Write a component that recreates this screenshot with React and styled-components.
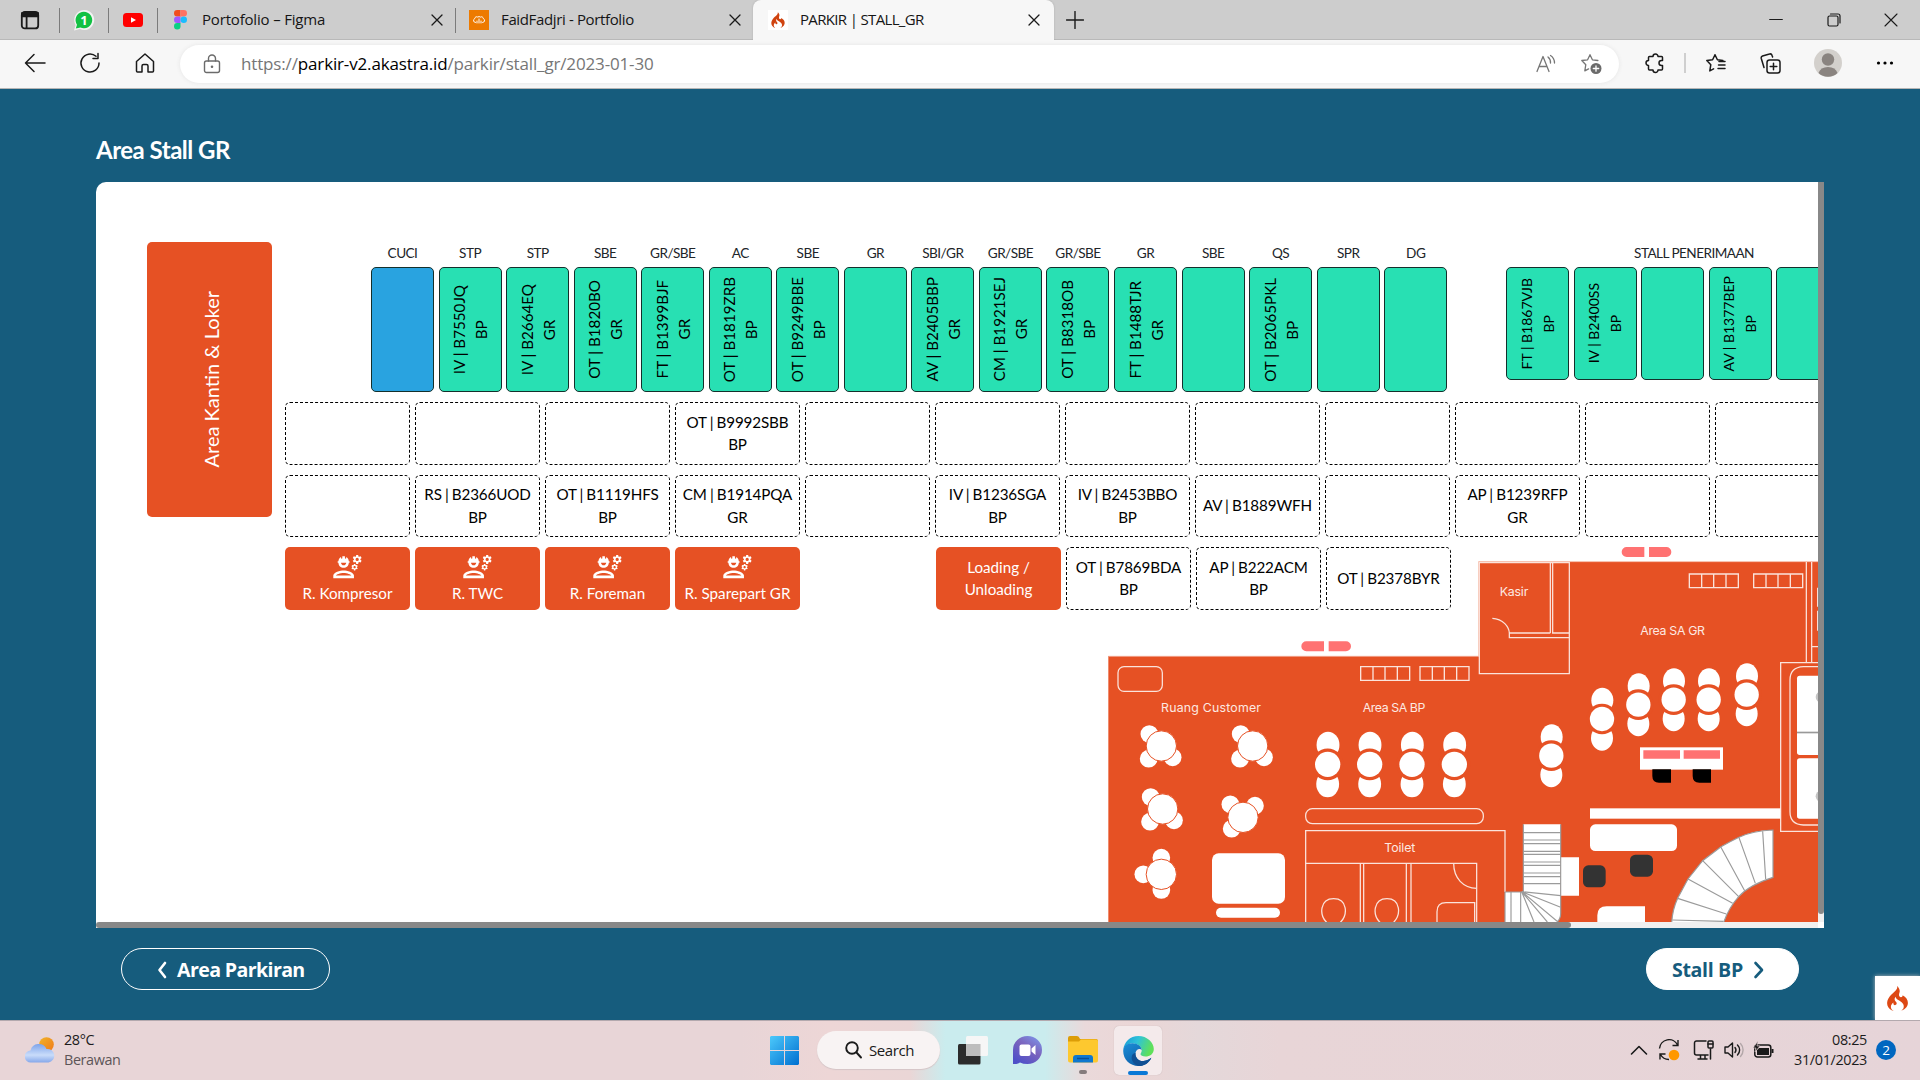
import React from 'react';
import styled, { createGlobalStyle, css } from 'styled-components';
import { MdOutlineEngineering } from 'react-icons/md';
import { SiCodeigniter } from 'react-icons/si';

const Global = createGlobalStyle`
  * { box-sizing: border-box; }
  body { margin: 0; background: #165c7d; overflow: hidden; }
`;
const UI = `'Open Sans', 'Noto Sans', sans-serif`;
const LATO = `Lato, 'Open Sans', sans-serif`;
const ORANGE = '#e65124';

const Screen = styled.div`
  width: 1920px; height: 1080px; display: flex; flex-direction: column;
  overflow: hidden; background: #165c7d; font-family: ${UI};
  svg { display: block; flex: none; }
`;

/* ---------- browser chrome ---------- */
const TabBar = styled.div`
  height: 40px; flex: none; display: flex; align-items: center; background: #cdcdcd;
  box-shadow: inset 0 -1px 0 #b9b9b9;
`;
const Slot = styled.div`
  width: ${p => p.$w}px; height: 100%; flex: none; display: flex; align-items: center; justify-content: center;
  margin-left: ${p => p.$ml || 0}px;
`;
const Divider = styled.i`
  width: ${p => p.$w || 1}px; height: ${p => p.$h || 25}px; flex: none;
  background: ${p => p.$c || '#7b7b7b'}; margin-left: ${p => p.$ml || 0}px;
`;
const Tab = styled.div`
  width: ${p => p.$w}px; height: 40px; flex: none; display: flex; align-items: center;
  padding: 0 ${p => p.$pr}px 0 ${p => p.$pl}px; font-size: 15px; color: #151515;
  letter-spacing: ${p => p.$ls}px; white-space: nowrap;
  ${p => p.$active && css`background: #f7f7f7; border-radius: 8px 8px 0 0; box-shadow: 0 0 2px #aaa; clip-path: inset(0 -2px 0 -2px);`}
`;
const TabIcon = styled.span`
  width: 20px; height: 20px; margin-right: ${p => p.$mr}px; display: flex; align-items: center; justify-content: center; flex: none;
  background: ${p => p.$bg || 'transparent'};
`;
const TabTitle = styled.span`flex: 1; line-height: 20px; padding-bottom: 2px;`;
const Toolbar = styled.div`
  height: 49px; flex: none; display: flex; align-items: center; background: #f7f7f7;
  border-bottom: 1px solid #b5b5b5; padding: 0 0 2px 7.5px;
`;
const Address = styled.div`
  width: 1439px; height: 38px; flex: none; margin: 1px 0 0 7.5px; border-radius: 19px; background: #fff;
  display: flex; align-items: center; padding: 0 6px 0 17px; box-shadow: 0 0 4px #e4e4e4;
`;
const Url = styled.span`
  flex: 1; margin-left: 14px; font-size: 17px; letter-spacing: -0.15px; color: #767676; white-space: nowrap;
  b { font-weight: 400; color: #000; }
`;

/* ---------- page ---------- */
const Page = styled.main`
  height: 931px; flex: none; padding: 44px 96px 0; display: flex; flex-direction: column; background: #165c7d;
`;
const Title = styled.h1`
  margin: 0; height: 49px; font: 700 24px/33px ${LATO}; letter-spacing: -0.5px; color: #fff;
`;
const Panel = styled.section`
  width: 1728px; height: 746px; flex: none; display: grid; grid-template: 740px 6px / 1722px 6px;
  background: #fff; border-radius: 10px 0 0 0; overflow: hidden;
`;
const Viewport = styled.div`overflow: hidden; display: flex; padding-left: 51px;`;
const VTrack = styled.div`background: #f0f0f0;`;
const VThumb = styled.div`height: 732px; background: #888; border-radius: 0 0 3px 3px;`;
const HTrack = styled.div`background: #f0f0f0;`;
const HThumb = styled.div`height: 6px; width: 1475px; background: #888; border-radius: 3px;`;

const Canteen = styled.div`
  width: 125px; height: 275px; flex: none; margin: 60px 13px 0 0; background: ${ORANGE}; border-radius: 5px;
  display: flex; align-items: center; justify-content: center; color: #fff;
  font: 400 20px/26px ${LATO}; padding-left: 2px;
  span { writing-mode: vertical-rl; transform: rotate(180deg); }
`;
const Lots = styled.div`flex: none; width: 1800px; padding-top: 57px;`;
const StallLine = styled.div`display: flex; align-items: flex-start; margin-left: 86px; height: 153px;`;
const StallGroup = styled.div`display: flex; gap: 4.55px; margin-left: ${p => p.$ml || 0}px;`;
const StallCol = styled.div`width: 63px; flex: none;`;
const Label = styled.div`
  height: 28px; font: 400 13.6px/29px ${LATO}; color: #212529; text-align: center; white-space: nowrap;
  letter-spacing: -0.55px; width: ${p => p.$w ? p.$w + 'px' : 'auto'};
`;
const Stall = styled.div`
  width: 63px; height: ${p => p.$h}px; flex: none; border: 1px solid #14302c; border-radius: 5px;
  background: ${p => p.$blue ? '#29a3e0' : '#28e0b3'};
  display: flex; align-items: center; justify-content: center;
  color: #000; font: 400 ${p => p.$fs || 15.2}px/22px ${LATO}; text-align: center; white-space: nowrap;
  span { writing-mode: vertical-rl; transform: rotate(180deg); }
`;
const Reception = styled.div`margin-left: 58.8px; flex: none;`;
const LotRow = styled.div`display: flex; gap: 5px; margin-top: 10px; height: ${p => p.$h}px;`;
const Lot = styled.div`
  width: 125px; height: 100%; flex: none; display: flex; flex-direction: column; align-items: center; justify-content: center;
  font: 400 15.2px/22.4px ${LATO}; letter-spacing: -0.12px; word-spacing: -0.6px; color: #000; text-align: center; white-space: nowrap;
  border: 1px dashed #000; border-radius: 5px; padding-bottom: 1px; margin-left: ${p => p.$ml || 0}px;
  ${p => p.$solid && css`background: ${ORANGE}; border: 0; color: #fff; letter-spacing: 0; word-spacing: 0;`}
`;
const Bottom = styled.div`
  display: grid; grid-template-columns: 1fr;
  > * { grid-area: 1 / 1; }
  > svg { margin: 10px 0 0 823px; }
`;
const Nav = styled.div`display: flex; justify-content: space-between; padding: 20px 25px 0;`;
const NavButton = styled.button`
  width: ${p => p.$w}px; height: 42px; border-radius: 21px; padding: 1px 0 0 ${p => p.$pl}px; display: flex; align-items: center;
  gap: ${p => p.$gap}px; font: 700 19.6px/28px ${UI}; letter-spacing: ${p => p.$ls}px; white-space: nowrap;
  border: 1px solid #fff; background: ${p => p.$filled ? '#fff' : 'transparent'}; color: ${p => p.$filled ? '#165c7d' : '#fff'};
`;
const DebugBadge = styled.div`
  position: absolute; left: 1875px; top: 976px; width: 45px; height: 44px; background: #fff; color: #dd4814;
  display: flex; align-items: center; justify-content: center; box-shadow: 0 0 4px #bbb;
`;

/* ---------- taskbar ---------- */
const Taskbar = styled.footer`
  height: 60px; flex: none; display: flex; align-items: center; border-top: 1px solid #b3a9ae; position: relative; padding-bottom: 1px;
  background: linear-gradient(90deg, #e8d5d7 0, #e8d5d7 740px, #edd6d6 830px, #ead6d6 910px, #caecee 945px, #caecee 1045px, #ead9da 1085px, #ebd6d6 1140px, #e4d8da 1200px, #e8d5d7 1280px, #e6d4d8 100%);
`;
const Stack = styled.div`
  display: flex; flex-direction: column; width: ${p => p.$w}px; flex: none; margin-left: ${p => p.$ml || 0}px; text-align: ${p => p.$right ? 'right' : 'left'};
  font-size: 14.4px; line-height: 20px; letter-spacing: ${p => p.$ls}px; color: #1c1c1c; white-space: nowrap; padding-bottom: 1px;
  em { font-style: normal; color: #5d5557; }
`;
const SearchPill = styled.div`
  width: 123px; height: 38px; border-radius: 19px; background: #f8f3f3; margin-left: 18px; flex: none;
  display: flex; align-items: center; padding-left: 28px; gap: 7px; font-size: 15px; letter-spacing: -0.4px; color: #1a1a1a;
  box-shadow: 0 1px 1px #d5c5c7;
`;
const AppTile = styled.div`
  width: 48px; height: 49px; margin-left: ${p => p.$ml}px; border-radius: 5px; flex: none; display: flex; flex-direction: column;
  align-items: center; justify-content: flex-end; gap: ${p => p.$gap}px; padding-bottom: ${p => p.$pb || 0}px;
  ${p => p.$active && css`background: #f4eaeb; box-shadow: 0 0 1px #bbaaac;`}
`;
const Mark = styled.i`width: ${p => p.$w}px; height: 4px; border-radius: 2px; background: ${p => p.$c};`;
const Count = styled.div`
  width: 20px; height: 20px; border-radius: 50%; background: #0067c0; color: #fff; font-size: 13.5px; line-height: 20px; text-align: center; margin-left: 9px;
`;

/* ---------- icons ---------- */
const Line = ({ w = 20, h = 20, sw = 1.4, c = '#1a1a1a', children }) => (
  <svg width={w} height={h} viewBox={`0 0 ${w} ${h}`} fill="none" stroke={c} strokeWidth={sw} strokeLinecap="round" strokeLinejoin="round">{children}</svg>
);
const Close = () => <Line w={16} h={16} sw={1.3}><path d="M3 3l10 10M13 3L3 13" /></Line>;
const star = 'M10 1.8l2.4 5 5.5.7M10 1.8l-2.4 5-5.8.7 4 4.2-1 6.2 3.8-2';

/* ---------- floor plan ---------- */
const Seat = ({ x, y, s = 1 }) => (
  <g transform={`translate(${x} ${y}) scale(${s})`}>
    <ellipse cx="1" cy="-56" rx="33" ry="38" fill="#fff" />
    <ellipse cx="0" cy="57" rx="33" ry="38" fill="#fff" />
    <circle r="46" fill={ORANGE} />
    <circle r="36.5" fill="#fff" />
  </g>
);
const Round = ({ x, y, seats }) => (
  <g transform={`translate(${x} ${y})`} fill="#fff">
    {seats.map(([a, b], i) => <circle key={i} cx={a} cy={b} r="26.5" />)}
    <circle r="45.5" stroke={ORANGE} strokeWidth="3" />
  </g>
);
const Shelf = ({ x, y }) => (
  <path strokeWidth="4" d={`M${x} ${y}h147v41h-147zM${x + 37} ${y}v41M${x + 73} ${y}v41M${x + 110} ${y}v41`} />
);
const PlanText = ({ x, y, w, children }) => (
  <text x={x} y={y} textLength={w} fontSize="37" fontWeight="400" fontFamily="Inter, Lato, sans-serif" fill="#fde9e2" stroke="none">{children}</text>
);
const Door = ({ x, y }) => (
  <path fill="#ff7272" d={`M${x + 14} ${y}h53v30h-53a15 15 0 0 1 0-30zM${x + 81} ${y}h52a15 15 0 0 1 0 30h-52z`} />
);
const three = [[-36, -36], [-38, 38], [34, 34]];
const FloorPlan = () => (
  <svg width="710" height="375" viewBox="24 21 2130 1125">
    <path fill={ORANGE} d="M24 349H1136V66H2160V1146H24z" />
    <g transform="translate(0 240)" fill="none" stroke="#fbe3db" strokeWidth="3.8">
      <g stroke="none"><Door x={605} y={64} /></g>
      <path d="M25 906V109H1138" stroke="#f3a78f" strokeWidth="2.5" />
      <rect x="54" y="140" width="133" height="74" rx="18" />
      <Shelf x={782} y={140} /><Shelf x={960} y={140} />
      <PlanText x={183} y={275} w={300}>Ruang Customer</PlanText>
      <PlanText x={788} y={277} w={188}>Area SA BP</PlanText>
      <PlanText x={853} y={696} w={93}>Toilet</PlanText>
      <g stroke="none">
        <Round x={184} y={378} seats={three} />
        <Round x={458} y={378} seats={three} />
        <Round x={188} y={567} seats={three} />
        <Round x={429} y={592} seats={[[-38, -39], [36, -35], [-34, 34]]} />
        <Round x={184} y={763} seats={[[0, -50], [-54, 0], [0, 47]]} />
        {[683, 809, 936, 1063].map(x => <Seat key={x} x={x} y={433} s={1.04} />)}
        <rect x="336" y="700" width="219" height="151" rx="20" fill="#fff" />
        <rect x="348" y="863" width="192" height="30" rx="15" fill="#fff" />
      </g>
      <rect x="617" y="566" width="533" height="45" rx="20" />
      <path d="M617 910V632H1215V816M617 730H1130V910M781 730V910M791 730V910M919 730V910M933 730V910" />
      <path d="M1061 730C1061 775 1090 804 1130 805M1011 910V875Q1011 848 1038 848H1124V910" />
      <path d="M683 910C655 885 660 836 701 836S746 885 718 910M843 910C815 885 820 836 861 836S905 885 878 910" />
    </g>
    <g transform="translate(1080 0)" fill="none" stroke="#fbe3db" strokeWidth="3.8">
      <g stroke="none"><Door x={486} y={21} /></g>
      <path d="M55 65H1080" stroke="#f3a78f" strokeWidth="2.5" />
      <path d="M58 68H328V401H58zM271 68V279M278 68V279H328M97 235C130 236 147 262 148 279H271M148 279V293H328" />
      <Shelf x={688} y={102} /><Shelf x={881} y={102} />
      <PlanText x={119} y={168} w={86}>Kasir</PlanText>
      <PlanText x={541} y={285} w={194}>Area SA GR</PlanText>
      <path d="M1039 66V368M1055 66V368M1055 320H1080M1080 368H962V874H1080M1080 380H1030Q990 382 990 420V815Q990 853 1030 855H1080M1073 143V200M1073 212V272" />
      <g stroke="none">
        {[[274, 647], [426, 537], [535, 494], [641, 479], [746, 479], [860, 464]].map(([x, y]) => <Seat key={x} x={x} y={y} />)}
        <rect x="1011" y="407" width="90" height="238" rx="8" fill="#fff" />
        <rect x="1011" y="655" width="90" height="181" rx="8" fill="#fff" />
        <circle cx="1084" cy="471" r="17" fill="#c4c4c4" /><circle cx="1084" cy="769" r="17" fill="#c4c4c4" />
        <rect x="1011" y="575" width="90" height="5" fill="#999" />
        <rect x="540" y="622" width="249" height="67" fill="#fff" />
        <path fill="#ff7272" d="M550 631h110v25H550zM671 631h109v25H671z" />
        <path fill="#000" d="M577 688h56v40h-36q-20 0-20-20zM698 688h55v40h-35q-20 0-20-20z" />
        <rect x="390" y="805" width="571" height="31" fill="#fff" />
        <rect x="390" y="853" width="261" height="80" rx="16" fill="#fff" />
        <rect x="369" y="976" width="68" height="66" rx="16" fill="#333" />
        <rect x="510" y="944" width="69" height="66" rx="16" fill="#333" />
        <path fill="#fff" d="M412 1146V1126Q412 1099 440 1099H555V1146zM302 952h55v115h-55z" />
      </g>
      <g stroke="#9b9b9b" strokeWidth="3.5">
        <path fill="#fff" stroke="none" d="M190 853H302V1120Q302 1135 292 1146H135V1056H190z" />
        <path d="M190 853V1056M302 853V1120Q302 1135 292 1146M190 878H302M190 900H302M190 911H302M190 934H302M190 943H302M190 966H302M190 976H302M190 999H302M190 1010H302M190 1031H302M135 1146V1056H185M153 1056V1146M182 1056V1146M185 1055L302 1067M185 1055L302 1102M185 1055L294 1146M185 1055L262 1146M185 1055L222 1146" />
        <path fill="#fff" d="M939 870C888 872 862 880 837 892S783 920 783 920 728 962 728 962 684 1017 684 1017 653 1075 653 1075Q637 1110 635 1150H790Q805 1105 836 1070T939 1012z" />
        <path d="M908 874L917 1017M837 893L886 1030M782 920L854 1052M728 962L836 1070M684 1017L818 1090M653 1075L799 1122M637 1140L790 1144" />
      </g>
    </g>
  </svg>
);

/* ---------- data ---------- */
const stalls = [
  ['CUCI'], ['STP', 'IV | B7550JQ', 'BP'], ['STP', 'IV | B2664EQ', 'GR'], ['SBE', 'OT | B1820BO', 'GR'],
  ['GR/SBE', 'FT | B1399BJF', 'GR'], ['AC', 'OT | B1819ZRB', 'BP'], ['SBE', 'OT | B9249BBE', 'BP'], ['GR'],
  ['SBI/GR', 'AV | B2405BBP', 'GR'], ['GR/SBE', 'CM | B1921SEJ', 'GR'], ['GR/SBE', 'OT | B8318OB', 'BP'],
  ['GR', 'FT | B1488TJR', 'GR'], ['SBE'], ['QS', 'OT | B2065PKL', 'BP'], ['SPR'], ['DG'],
];
const reception = [['FT | B1867VJB', 'BP'], ['IV | B2400SS', 'BP'], [], ['AV | B1377BEP', 'BP'], []];
const row1 = [[], [], [], ['OT | B9992SBB', 'BP'], [], [], [], [], [], [], [], []];
const row2 = [[], ['RS | B2366UOD', 'BP'], ['OT | B1119HFS', 'BP'], ['CM | B1914PQA', 'GR'], [], ['IV | B1236SGA', 'BP'],
  ['IV | B2453BBO', 'BP'], ['AV | B1889WFH'], [], ['AP | B1239RFP', 'GR'], [], []];
const rooms = ['R. Kompresor', 'R. TWC', 'R. Foreman', 'R. Sparepart GR'];
const row3 = [['OT | B7869BDA', 'BP'], ['AP | B222ACM', 'BP'], ['OT | B2378BYR']];
const Lines = ({ t }) => t.map((s, i) => <div key={i}>{s}</div>);

export default function App() {
  return (
    <Screen>
      <Global />
      <TabBar>
        <Slot $w={59}><Line w={20} h={20} sw={1.8}><rect x="1.8" y="2" width="16.4" height="16.4" rx="3" /><path d="M2 3h16v3.4H2z" fill="#1a1a1a" /><path d="M6.6 7v11" /></Line></Slot>
        <Divider />
        <Slot $w={48}>
          <svg width="22" height="22" viewBox="0 0 22 22"><path d="M1 21.5L2.6 16A10 10 0 1 1 7 20z" fill="#f3f3f3" /><path d="M2.8 19.6L4 15.7A8.3 8.3 0 1 1 7.4 18.6z" fill="#12c143" /><text x="11" y="15.5" textAnchor="middle" fontFamily="Open Sans, sans-serif" fontWeight="700" fontSize="13" fill="#fff">1</text></svg>
        </Slot>
        <Divider />
        <Slot $w={48}><svg width="20" height="14"><rect width="20" height="14" rx="3.5" fill="red" /><path d="M8 4.2v5.6l5-2.8z" fill="#fff" /></svg></Slot>
        <Divider />
        <Tab $w={297} $pl={12} $pr={10} $ls={-0.18}>
          <TabIcon $mr={12}><svg width="13" height="19.5" viewBox="0 0 2 3"><path d="M.5 0H1v1H.5a.5.5 0 0 1 0-1z" fill="#f24e1e" /><path d="M1 0h.5a.5.5 0 0 1 0 1H1z" fill="#ff7262" /><path d="M.5 1H1v1H.5a.5.5 0 0 1 0-1z" fill="#a259ff" /><circle cx="1.5" cy="1.5" r=".5" fill="#1abcfe" /><path d="M.5 2H1v.5a.5.5 0 1 1-.5-.5z" fill="#0acf83" /></svg></TabIcon>
          <TabTitle>Portofolio – Figma</TabTitle><Close />
        </Tab>
        <Divider />
        <Tab $w={297} $pl={13} $pr={10} $ls={-0.36}>
          <TabIcon $mr={12} $bg="#ed7a00"><Line w={14} h={10} sw={1} c="#fff"><path d="M3.5 7.5a2 2 0 0 1-.8-3.8 2 2 0 0 1 3.1-1.6 2 2 0 0 1 2.6 0 2 2 0 0 1 3 1.6 2 2 0 0 1-.8 3.8M5 8V6M9 6v2M7 4v4" /></Line></TabIcon>
          <TabTitle>FaidFadjri - Portfolio</TabTitle><Close />
        </Tab>
        <Tab $active $w={301} $pl={15} $pr={12} $ls={-0.66}>
          <TabIcon $mr={12} $bg="#fff"><SiCodeigniter size={16} color="#d0430f" /></TabIcon>
          <TabTitle>PARKIR | STALL_GR</TabTitle><Close />
        </Tab>
        <Slot $w={42}><Line w={18} h={18} sw={1.4}><path d="M9 .5v17M.5 9h17" /></Line></Slot>
        <Slot $w={58} $ml={651}><Line w={14} h={14} sw={1.2}><path d="M.7 6.5h12.6" /></Line></Slot>
        <Slot $w={57}><Line w={14} h={14} sw={1.2}><rect x="1" y="3" width="10" height="10" rx="1.5" /><path d="M3.5 1h7.500a2 2 0 0 1 2 2v7" /></Line></Slot>
        <Slot $w={58}><Line w={14} h={14} sw={1.1}><path d="M1 1l12 12M13 1L1 13" /></Line></Slot>
      </TabBar>
      <Toolbar>
        <Slot $w={55}><Line w={22} h={20} sw={1.5}><path d="M21 10H1.5M10 1.5L1.5 10l8.500 8.500" /></Line></Slot>
        <Slot $w={55}><Line w={22} h={22} sw={1.5}><path d="M20 11a9 9 0 1 1-3-6.700M19 1.500V6.500H14" /></Line></Slot>
        <Slot $w={55}><Line w={20} h={20} sw={1.5}><path d="M1.500 8.500L10 1l8.500 7.500V18a1 1 0 0 1-1 1H13v-6a1.500 1.500 0 0 0-1.500-1.500h-3A1.500 1.500 0 0 0 7 13v6H2.500a1 1 0 0 1-1-1z" /></Line></Slot>
        <Address>
          <Slot $w={30}><Line w={18} h={20} c="#6b6b6b" sw={1.400}><rect x="1.500" y="7" width="15" height="11.500" rx="2" /><path d="M5.500 7V4.500a3.500 3.500 0 0 1 7 0V7" /><circle cx="9" cy="12.700" r=".6" fill="#6b6b6b" /></Line></Slot>
          <Url>https://<b>parkir-v2.akastra.id</b>/parkir/stall_gr/2023-01-30</Url>
          <Slot $w={45}><Line w={20} h={20} c="#767676" sw={1.300}><path d="M1 17.500L7 2.500l6 15M3.200 12.500h7.600M12 3a7 7 0 0 1 2.500 6M14.500 1.500A9 9 0 0 1 18.500 9" /></Line></Slot>
          <Slot $w={45}><Line w={22} h={22} c="#767676" sw={1.300}><path d={star} /><circle cx="16" cy="15.500" r="5.500" fill="#6b6b6b" stroke="none" /><path d="M16 12.800v5.400M13.300 15.500h5.400" stroke="#fff" /></Line></Slot>
        </Address>
        <Slot $w={38} $ml={17}><Line w={20} h={22} sw={1.500}><path d="M4.500 4.500H8a2.500 2.500 0 0 1 5 0h3.500a1 1 0 0 1 1 1v3h-1a2.500 2.500 0 0 0 0 5h1V17a1 1 0 0 1-1 1H13a2.500 2.500 0 0 1-5 0H4.500a1 1 0 0 1-1-1v-3.500a2.500 2.500 0 0 1 0-5v-3a1 1 0 0 1 1-1z" /></Line></Slot>
        <Divider $ml={10} $w={2} $h={20} $c="#cfcfcf" />
        <Slot $w={58}><Line w={21} h={20} sw={1.500}><path d={star} /><path d="M14 8.500h6M13.500 12h6.500M13 15.500h7" /></Line></Slot>
        <Slot $w={52}><Line w={21} h={21} sw={1.500}><rect x="7" y="7" width="13" height="13" rx="2.500" /><path d="M13.500 10.200v6.600M10.200 13.500h6.600M4 14.500L1.200 5.200A2 2 0 0 1 2.500 3l7-2a2 2 0 0 1 2.500 1.300l.6 1.700" /></Line></Slot>
        <Slot $w={64}><svg width="28" height="28"><circle cx="14" cy="14" r="14" fill="#d3d0cc" /><circle cx="14" cy="10.500" r="6.200" fill="#8a8480" /><path d="M4.500 24q2-6 9.500-6t9.500 6a14 14 0 0 1-19 0z" fill="#8a8480" /></svg></Slot>
        <Slot $w={50}><svg width="18" height="4"><circle cx="2.500" cy="2" r="1.600" /><circle cx="9" cy="2" r="1.600" /><circle cx="15.500" cy="2" r="1.600" /></svg></Slot>
      </Toolbar>

      <Page>
        <Title>Area Stall GR</Title>
        <Panel>
          <Viewport>
            <Canteen><span>Area Kantin &amp; Loker</span></Canteen>
            <Lots>
              <StallLine>
                <StallGroup>
                  {stalls.map(([label, ...t], i) => (
                    <StallCol key={i}><Label>{label}</Label><Stall $h={125} $blue={i === 0}><span><Lines t={t} /></span></Stall></StallCol>
                  ))}
                </StallGroup>
                <Reception>
                  <Label $w={376}>STALL PENERIMAAN</Label>
                  <StallGroup>{reception.map((t, i) => <Stall key={i} $h={112.5} $fs={14}><span><Lines t={t} /></span></Stall>)}</StallGroup>
                </Reception>
              </StallLine>
              <LotRow $h={63}>{row1.map((t, i) => <Lot key={i}><Lines t={t} /></Lot>)}</LotRow>
              <LotRow $h={62}>{row2.map((t, i) => <Lot key={i}><Lines t={t} /></Lot>)}</LotRow>
              <Bottom>
                <LotRow $h={63}>
                  {rooms.map(r => <Lot key={r} $solid><MdOutlineEngineering size={31} /><div>{r}</div></Lot>)}
                  <Lot $solid $ml={131}><Lines t={['Loading /', 'Unloading']} /></Lot>
                  {row3.map((t, i) => <Lot key={i}><Lines t={t} /></Lot>)}
                </LotRow>
                <FloorPlan />
              </Bottom>
            </Lots>
          </Viewport>
          <VTrack><VThumb /></VTrack>
          <HTrack><HThumb /></HTrack>
        </Panel>
        <Nav>
          <NavButton $w={209} $pl={34} $gap={9} $ls={-0.62}>
            <Line w={12} h={18} sw={2.600} c="#fff"><path d="M9 2L3.500 9 9 16" /></Line>Area Parkiran
          </NavButton>
          <NavButton $filled $w={153} $pl={25} $gap={10} $ls={-0.35}>
            Stall BP<Line w={12} h={18} sw={2.600} c="#165c7d"><path d="M2.500 2L9 9l-6.500 7" /></Line>
          </NavButton>
        </Nav>
      </Page>
      <DebugBadge><SiCodeigniter size={25} /></DebugBadge>

      <Taskbar>
        <Slot $w={30} $ml={25}>
          <svg width="30" height="26" viewBox="0 0 30 26">
            <defs>
              <linearGradient id="sun" x2="1" y2="1"><stop stopColor="#f0b429" /><stop offset="1" stopColor="#f07818" /></linearGradient>
              <linearGradient id="cloud" x2="0" y2="1"><stop stopColor="#7ea4ea" /><stop offset=".6" stopColor="#c9dcfa" /><stop offset="1" stopColor="#86a8ea" /></linearGradient>
            </defs>
            <circle cx="21.500" cy="7.500" r="7.300" fill="url(#sun)" />
            <path d="M6 25.500a6 6 0 0 1-.5-12A8.500 8.500 0 0 1 21.500 12a6.800 6.800 0 0 1 2 13.500z" fill="url(#cloud)" />
          </svg>
        </Slot>
        <Stack $w={90} $ml={9} $ls={-0.4}><span>28°C</span><em>Berawan</em></Stack>
        <Slot $w={29} $ml={616}>
          <svg width="29" height="29" viewBox="0 0 29 29"><defs><linearGradient id="win" gradientUnits="userSpaceOnUse" x1="0" y1="0" x2="29" y2="29"><stop stopColor="#4cc9fb" /><stop offset="1" stopColor="#006fd0" /></linearGradient></defs><path fill="url(#win)" d="M1 0h13v14H0V1zM15 0h13l1 1v13H15zM0 15h14v14H1l-1-1zM15 15h14v13l-1 1H15z" /></svg>
        </Slot>
        <SearchPill><Line w={17} h={18} sw={1.900}><circle cx="7" cy="7" r="5.800" /><path d="M11.500 11.500l4.500 5" /></Line>Search</SearchPill>
        <Slot $w={30} $ml={18}>
          <svg width="30" height="29"><rect y="8" width="22.500" height="20.500" rx="1.500" fill="#2c2c2c" /><rect x="8" width="22" height="20" rx="1.500" fill="#f6f6f6" /><path d="M8 8h14.500v12H8z" fill="#bdbdbd" /></svg>
        </Slot>
        <Slot $w={30} $ml={24}>
          <svg width="29" height="29"><defs><linearGradient id="chat" x1="1" y1="0" x2=".3" y2="1"><stop stopColor="#7d9cf0" /><stop offset=".5" stopColor="#7b64bd" /><stop offset="1" stopColor="#4f50c8" /></linearGradient></defs><path d="M0 28V14A14.500 14 0 1 1 14.500 28Q10 28 7 26.500Q4 28.500 0 28z" fill="url(#chat)" /><rect x="6.500" y="8.500" width="11" height="11.500" rx="2" fill="#fff" /><path d="M18.500 12.500l4-3.500v10l-4-3.500z" fill="#fff" /></svg>
        </Slot>
        <AppTile $ml={17} $gap={7} $pb={1}>
          <svg width="30" height="27"><path d="M0 2Q0 0 2 0h7q2 0 3 3h16q2 0 2 2v4H0z" fill="#dc9d07" /><path d="M0 5.500h11l2-2h15q2 0 2 2v19q0 2-2 2H2q-2 0-2-2z" fill="#fdc82f" /><path d="M5 26.500V22q0-3 3-3h14q3 0 3 3v4.500z" fill="#0f78cf" /><path d="M9 22.500h12" stroke="#0a4f96" strokeWidth="1.500" /></svg>
          <Mark $w={8} $c="#857b7c" />
        </AppTile>
        <AppTile $ml={7} $gap={5} $active>
          <svg width="31" height="30" viewBox="0 0 31 30"><defs><linearGradient id="eg" x2="1" y2=".3"><stop stopColor="#1597d8" /><stop offset=".5" stopColor="#2fc3d8" /><stop offset="1" stopColor="#5fe05a" /></linearGradient><linearGradient id="eb" x2=".7" y2="1"><stop stopColor="#1c8fd8" /><stop offset="1" stopColor="#0c59a4" /></linearGradient></defs>
            <path d="M.3 14C1 6 7 0 15.500 0 24 0 30.800 6.500 30.800 13c0 5-4 7.500-8.300 7.500-3 0-5-1-5-2.200 0-1 1.200-1.500 1.200-4C18.700 10 14 7.500 9.500 7.500 5 7.500 1.500 10 .3 14z" fill="url(#eg)" />
            <path d="M.2 15C.2 10 4.500 7.300 9.500 7.300c5 0 9.200 3 9.200 7-.5-2-5.500-2.500-6.200 2.700C12 22 16 25.500 20.500 25c3.500-.3 6-2 7.800-3.300C26 27 21 30 15.500 30 7 30 .2 23.500.2 15z" fill="url(#eb)" />
            <path d="M12.500 17C12 22 16 25.500 20.500 25c3.500-.3 6-2 7.800-3.300C26 27 21 30 16 30c-5-1-8.500-6-7-10.500.6-1.500 2-2.300 3.500-2.500z" fill="#104f93" /></svg>
          <Mark $w={20} $c="#0a78d6" />
        </AppTile>
        <Slot $w={20} $ml={467}><Line w={18} h={12} sw={1.600}><path d="M1.500 10L9 2.500 16.500 10" /></Line></Slot>
        <Slot $w={22} $ml={9}><svg width="22" height="22" fill="none" stroke="#1a1a1a" strokeWidth="1.400"><path d="M1.500 9.500A9.500 9.500 0 0 1 19.500 6M20 1v5.500h-5.500M2 20.500V15h5.500M2.500 15.500A9.500 9.500 0 0 0 11 20.500" /><circle cx="16" cy="16" r="5.300" fill="#ff9800" stroke="none" /></svg></Slot>
        <Slot $w={22} $ml={13}><Line w={22} h={22} sw={1.500}><path d="M13 2H3.500a2 2 0 0 0-2 2v10a2 2 0 0 0 2 2H15M5 20h9M7.500 16v4M12 16v4M17.500 10v10" /><rect x="15" y="2" width="5" height="7" rx="1" /><path d="M15 5h5" /></Line></Slot>
        <Slot $w={22} $ml={8}><Line w={22} h={18} sw={1.400}><path d="M2 6h3l4.500-4v14L5 12H2zM12 6.500a4 4 0 0 1 0 5M14.500 4a7 7 0 0 1 0 10" /><path d="M17.500 2.500a9.500 9.500 0 0 1 0 13" stroke="#b3a7a9" /></Line></Slot>
        <Slot $w={22} $ml={8}><svg width="22" height="18"><rect x="1.800" y="4" width="16" height="12" rx="2.500" fill="none" stroke="#1a1a1a" strokeWidth="1.500" /><path d="M4 14V9l2-2h10v7zM18.500 8h2v4h-2z" fill="#1a1a1a" /><path d="M5 0L0 7h3L2 11l5-6H4z" fill="#1a1a1a" stroke="#e8d5d7" strokeWidth=".6" /></svg></Slot>
        <Stack $w={86} $ml={6} $ls={-0.35} $right><span>08:25</span><span>31/01/2023</span></Stack>
        <Count>2</Count>
      </Taskbar>
    </Screen>
  );
}
